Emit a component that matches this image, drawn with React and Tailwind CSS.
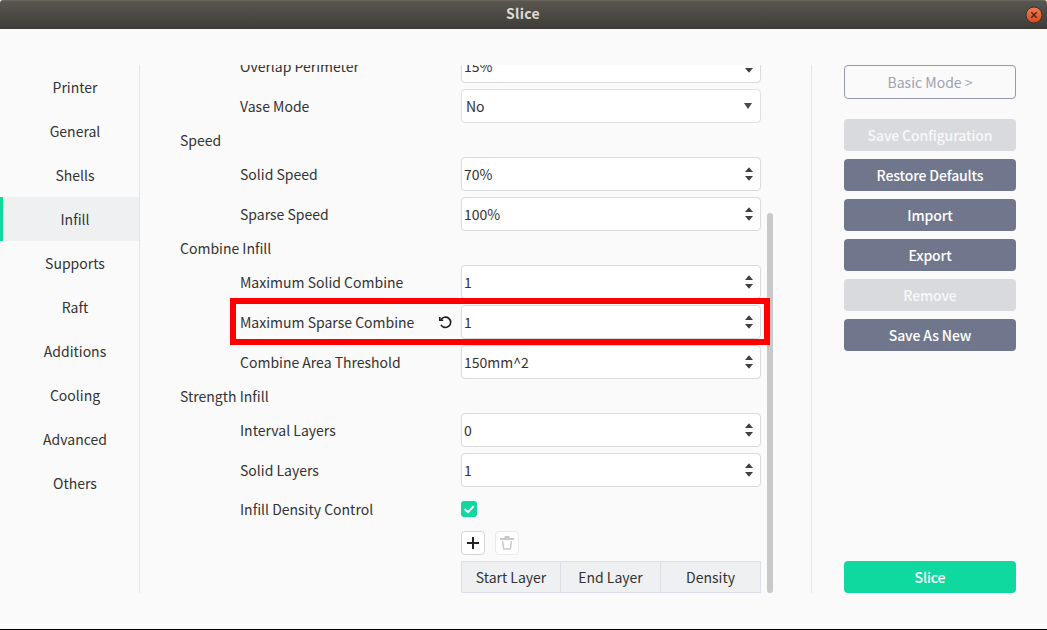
const tabs = ['Printer', 'General', 'Shells', 'Infill', 'Supports', 'Raft', 'Additions', 'Cooling', 'Advanced', 'Others'];

function SpinArrows() {
  return (
    <svg className="mr-[6px] shrink-0" width="10" height="14" viewBox="0 0 10 14" fill="#404040">
      <path d="M5 0.2 9 5H1z" />
      <path d="M5 13.8 9 9H1z" />
    </svg>
  );
}

function ResetIcon() {
  return (
    <svg width="14" height="14" viewBox="0 0 14 14" fill="none" stroke="#1e1e1e" strokeWidth="1.6">
      <path d="M2.9 5A5.15 5.15 0 1 1 3 9.8" />
      <path d="M1.8 2V5.2H5.2" />
    </svg>
  );
}

function Row({ label, children, reset }) {
  return (
    <div className="flex h-[34px] items-center pl-[60px]">
      <div className="flex w-[221px] items-center justify-between pr-[9px]">
        <span>{label}</span>
        {reset && <ResetIcon />}
      </div>
      {children}
    </div>
  );
}

function Spin({ label, value, reset }) {
  return (
    <Row label={label} reset={reset}>
      <div className="flex h-[34px] w-[300px] items-center justify-between rounded-[4px] border border-[#d9dadd] bg-white pl-[2px]">
        <span>{value}</span>
        <SpinArrows />
      </div>
    </Row>
  );
}

function Heading({ children }) {
  return <div className="flex h-[22px] items-center">{children}</div>;
}

function SideButton({ children, disabled }) {
  return (
    <button
      disabled={disabled}
      className={
        disabled
          ? 'h-8 w-full rounded-[4px] bg-[#d9dade] font-medium tracking-[-0.14px] text-[#f8f8f9]'
          : 'h-8 w-full rounded-[4px] bg-[#70778d] font-medium tracking-[-0.14px] text-white'
      }
    >
      {children}
    </button>
  );
}

export default function App() {
  return (
    <div className="flex h-[630px] w-[1047px] flex-col overflow-hidden border-b border-black bg-[#fafafa] font-['Noto_Sans_CJK_SC','Noto_Sans',sans-serif] text-[14px] leading-[22px] text-[#333333]">
      <header className="flex h-[29px] shrink-0 items-center rounded-t-[3px] border-t border-[#67645b] bg-linear-to-b from-[#59574f] to-[#3d3c37] pr-[4px] pl-[21px]">
        <h1 className="flex-1 pb-1 text-center text-[14px] font-bold tracking-[0.3px] text-[#dfdbd2]">Slice</h1>
        <svg width="18" height="18" viewBox="0 0 18 18">
          <defs>
            <linearGradient id="close" x1="0" y1="0" x2="0" y2="1">
              <stop offset="0" stopColor="#f27c55" />
              <stop offset="1" stopColor="#e0481a" />
            </linearGradient>
          </defs>
          <circle cx="9" cy="9" r="8" fill="url(#close)" stroke="#34332f" />
          <path d="M6.3 6.3 11.7 11.7M11.7 6.3 6.3 11.7" stroke="#46281c" strokeWidth="1.4" />
        </svg>
      </header>

      <div className="flex flex-1 pt-9 pb-9">
        <nav className="flex w-[140px] shrink-0 flex-col border-r border-[#e3e4e5]">
          {tabs.map((t) => (
            <div
              key={t}
              className={
                t === 'Infill'
                  ? 'flex h-11 shrink-0 items-center justify-center border-l-[3px] border-[#0fd99e] bg-[#eff0f2] pl-2'
                  : 'flex h-11 shrink-0 items-center justify-center border-l-[3px] border-transparent pl-2'
              }
            >
              {t}
            </div>
          ))}
        </nav>

        <main className="relative flex h-[528px] w-[672px] shrink-0 overflow-hidden border-r border-[#e3e4e5] pl-10">
          <div className="-mt-4 flex w-[581px] shrink-0 flex-col gap-[6px]">
            <Spin label="Overlap Perimeter" value="15%" />
            <Row label="Vase Mode">
              <div className="flex h-[34px] w-[300px] items-center justify-between rounded-[4px] border border-[#dfe0e3] bg-white pl-[4px]">
                <span>No</span>
                <svg className="mr-[8px]" width="8" height="6" viewBox="0 0 8 6" fill="#4a4a4a">
                  <path d="M0 0H8L4 6z" />
                </svg>
              </div>
            </Row>
            <Heading>Speed</Heading>
            <Spin label="Solid Speed" value="70%" />
            <Spin label="Sparse Speed" value="100%" />
            <Heading>Combine Infill</Heading>
            <Spin label="Maximum Solid Combine" value="1" />
            <Spin label="Maximum Sparse Combine" value="1" reset />
            <Spin label="Combine Area Threshold" value="150mm^2" />
            <Heading>Strength Infill</Heading>
            <Spin label="Interval Layers" value="0" />
            <Spin label="Solid Layers" value="1" />
            <div className="flex h-8 items-center pl-[60px]">
              <span className="w-[221px]">Infill Density Control</span>
              <svg width="16" height="16" viewBox="0 0 16 16">
                <rect width="16" height="16" rx="3" fill="#0fd99e" />
                <path d="M3.5 8 7 11.2 12.7 5.2" fill="none" stroke="white" strokeWidth="2" />
              </svg>
            </div>
            <div className="flex h-6 gap-[10px] pl-[281px]">
              <div className="flex size-6 items-center justify-center rounded-[4px] border border-[#d2d4da] bg-white">
                <svg width="12" height="12" viewBox="0 0 12 12" stroke="#222222" strokeWidth="2">
                  <path d="M6 0V12M0 6H12" />
                </svg>
              </div>
              <div className="flex size-6 items-center justify-center rounded-[4px] border border-[#e8e9eb] bg-white">
                <svg width="14" height="14" viewBox="0 0 14 14" fill="none" stroke="#c9c9c9" strokeWidth="1.5">
                  <path d="M0 3H14M4.5 1H9.5" strokeWidth="2" />
                  <path d="M2.6 5 3.7 13H10.3L11.4 5" />
                </svg>
              </div>
            </div>
            <div className="ml-[281px] flex h-8 w-[300px] border border-[#dcdfe6] bg-[#eff0f2] text-center leading-[31px]">
              <span className="w-[99px] border-r border-[#dcdfe6]">Start Layer</span>
              <span className="w-[100px] border-r border-[#dcdfe6]">End Layer</span>
              <span className="flex-1">Density</span>
            </div>
          </div>
          <div className="mt-[148px] ml-[6px] h-[380px] w-[6px] rounded-[3px] bg-[#c9c9cb]" />
          <div className="absolute top-[233px] left-[90px] h-[47px] w-[540px] border-6 border-[#ff0000]" />
        </main>

        <aside className="flex flex-1 flex-col pr-[31px] pl-8">
          <button className="h-[34px] shrink-0 rounded-[4px] border border-[#9699ae] text-[#9ea2b1]">Basic Mode &gt;</button>
          <div className="mt-5 flex flex-col gap-2">
            <SideButton disabled>Save Configuration</SideButton>
            <SideButton>Restore Defaults</SideButton>
            <SideButton>Import</SideButton>
            <SideButton>Export</SideButton>
            <SideButton disabled>Remove</SideButton>
            <SideButton>Save As New</SideButton>
          </div>
          <button className="mt-auto h-8 rounded-[4px] bg-[#0fd99e] font-medium tracking-[-0.14px] text-white">Slice</button>
        </aside>
      </div>
    </div>
  );
}
